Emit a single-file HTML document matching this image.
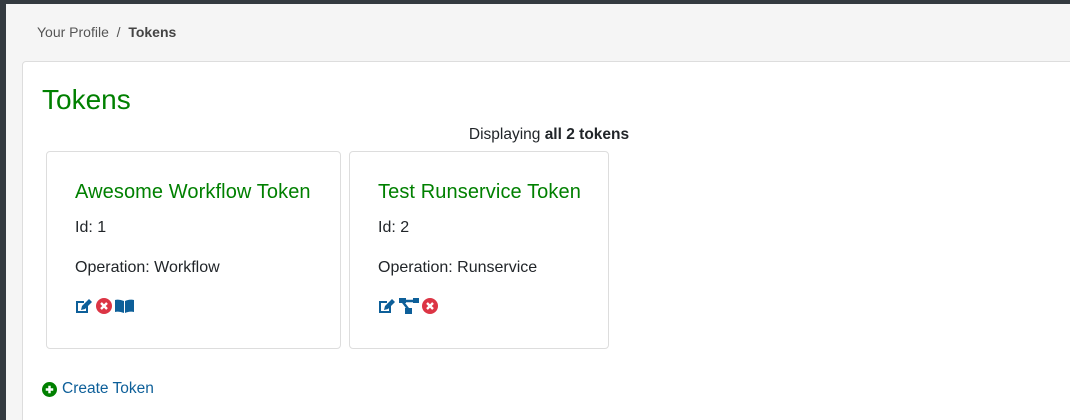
<!DOCTYPE html>
<html><head><meta charset="utf-8"><style>
*{box-sizing:border-box;margin:0;padding:0}
html,body{width:1070px;height:420px;overflow:hidden}
body{background:#343a40;font-family:"Liberation Sans",Roboto,sans-serif;color:#212529;font-size:15px;position:relative}
.wrap{position:absolute;left:6px;top:4px;width:1064px;height:416px;overflow:hidden;background:#f5f5f5}
.bc{position:absolute;left:31px;top:20px;font-size:14px;color:#555}
.bc b{color:#444}
.card{position:absolute;left:16px;top:57px;width:1060px;height:380px;background:#fff;border:1px solid #ddd;border-radius:4px}
h1{position:absolute;left:19px;top:22px;font-size:28px;font-weight:normal;color:#008000}
.disp{position:absolute;left:0;width:1052px;top:64px;text-align:center;font-size:15.5px}
.tc{position:absolute;top:89px;height:198px;border:1px solid #ddd;border-radius:4px;background:#fff}
.tc h2{position:absolute;left:28px;top:29px;font-size:20px;font-weight:normal;color:#008000;white-space:nowrap;letter-spacing:0.1px}
.tc .l1{position:absolute;left:28px;top:67px;font-size:16px}
.tc .l2{position:absolute;left:28px;top:107px;font-size:16px}
.tc .ic{position:absolute;left:28px;top:146px;display:flex;gap:3px;align-items:center}
.create{position:absolute;left:19px;top:318px;color:#0d5f99;font-size:15.5px;display:flex;align-items:center;gap:5px}
</style></head><body>
<div class="wrap">
<div class="bc">Your Profile &nbsp;/&nbsp; <b>Tokens</b></div>
<div class="card">
<h1>Tokens</h1>
<div class="disp">Displaying <b>all 2 tokens</b></div>
<div class="tc" style="left:23px;width:295px">
<h2>Awesome Workflow Token</h2>
<div class="l1">Id: 1</div>
<div class="l2">Operation: Workflow</div>
<div class="ic">
<svg width="18" height="16" viewBox="0 0 18 16"><path d="M1 3h8v2H3v8h8V8h2v7H1z" fill="#0d5f99"/><path d="M6 12l1-4 7-7 3 3-7 7z" fill="#0d5f99"/></svg>
<svg width="16" height="16" viewBox="0 0 16 16"><circle cx="8" cy="8" r="8" fill="#dc3545"/><path d="M5 5l6 6M11 5l-6 6" stroke="#fff" stroke-width="2.4"/></svg>
<svg width="19" height="16" viewBox="0 0 19 16"><path d="M0 2q4-1 9 1v12q-5-2-9-1zM10 3q5-2 9-1v12q-4-1-9 1z" fill="#0d5f99"/></svg>
</div>
</div>
<div class="tc" style="left:326px;width:260px">
<h2>Test Runservice Token</h2>
<div class="l1">Id: 2</div>
<div class="l2">Operation: Runservice</div>
<div class="ic">
<svg width="18" height="16" viewBox="0 0 18 16"><path d="M1 3h8v2H3v8h8V8h2v7H1z" fill="#0d5f99"/><path d="M6 12l1-4 7-7 3 3-7 7z" fill="#0d5f99"/></svg>
<svg width="20" height="16" viewBox="0 0 20 16"><rect x="0" y="0" width="7" height="5" fill="#0d5f99"/><rect x="14" y="0" width="6" height="5" fill="#0d5f99"/><rect x="6" y="10" width="7" height="6" fill="#0d5f99"/><path d="M3 3l7 9M5 3h10" stroke="#0d5f99" stroke-width="2.4"/></svg>
<svg width="16" height="16" viewBox="0 0 16 16"><circle cx="8" cy="8" r="8" fill="#dc3545"/><path d="M5 5l6 6M11 5l-6 6" stroke="#fff" stroke-width="2.4"/></svg>
</div>
</div>
<div class="create"><svg width="15" height="15" viewBox="0 0 16 16"><circle cx="8" cy="8" r="8" fill="#008000"/><path d="M8 4v8M4 8h8" stroke="#fff" stroke-width="2.6"/></svg>Create Token</div>
</div>
</div>
</body></html>
